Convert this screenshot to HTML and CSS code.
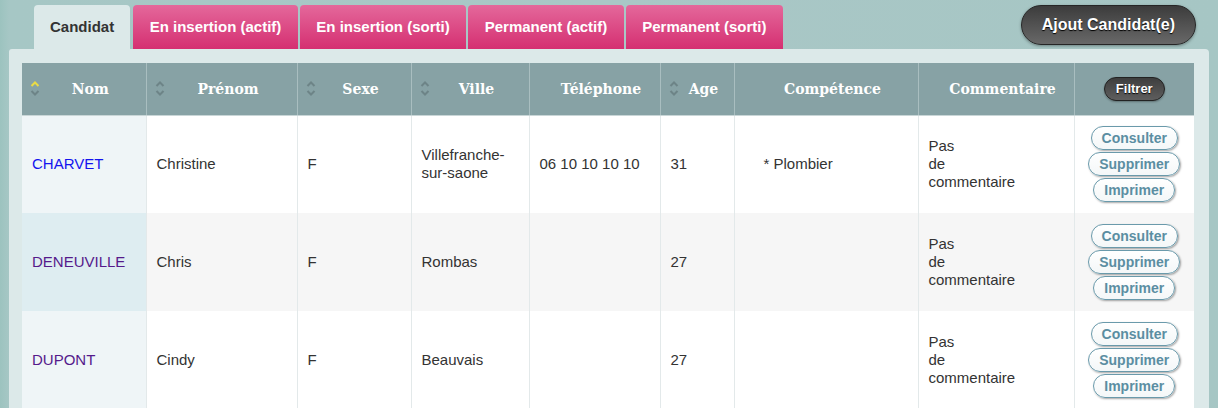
FILE: index.html
```html
<!DOCTYPE html>
<html lang="fr">
<head>
  <meta charset="UTF-8" />
  <title>Candidats</title>
  <link rel="stylesheet" href="styles.css">
</head>
<body>

<div class="page">
  <div class="topbar">
    <div class="tabs">
      <a class="tab current">Candidat</a>
      <a class="tab">En insertion (actif)</a>
      <a class="tab">En insertion (sorti)</a>
      <a class="tab">Permanent (actif)</a>
      <a class="tab">Permanent (sorti)</a>
    </div>
    <button class="add-btn">Ajout Candidat(e)</button>
  </div>

  <div class="panel">
    <table class="list">
      <colgroup>
        <col style="width:124px"><col style="width:151px"><col style="width:114px">
        <col style="width:118px"><col style="width:131px"><col style="width:74px">
        <col style="width:184px"><col style="width:156px"><col style="width:120px">
      </colgroup>
      <thead>
        <tr>
          <th><svg class="sort" width="10" height="17" viewBox="0 0 10 17"><path class="up on" d="M1.5 6 L5 2.5 L8.5 6"/><path class="down" d="M1.5 11 L5 14.5 L8.5 11"/></svg>Nom</th>
          <th><svg class="sort" width="10" height="17" viewBox="0 0 10 17"><path class="up" d="M1.5 6 L5 2.5 L8.5 6"/><path class="down" d="M1.5 11 L5 14.5 L8.5 11"/></svg>Prénom</th>
          <th><svg class="sort" width="10" height="17" viewBox="0 0 10 17"><path class="up" d="M1.5 6 L5 2.5 L8.5 6"/><path class="down" d="M1.5 11 L5 14.5 L8.5 11"/></svg>Sexe</th>
          <th><svg class="sort" width="10" height="17" viewBox="0 0 10 17"><path class="up" d="M1.5 6 L5 2.5 L8.5 6"/><path class="down" d="M1.5 11 L5 14.5 L8.5 11"/></svg>Ville</th>
          <th>Téléphone</th>
          <th><svg class="sort" width="10" height="17" viewBox="0 0 10 17"><path class="up" d="M1.5 6 L5 2.5 L8.5 6"/><path class="down" d="M1.5 11 L5 14.5 L8.5 11"/></svg>Age</th>
          <th>Compétence</th>
          <th>Commentaire</th>
          <th><button class="filter-btn">Filtrer</button></th>
        </tr>
      </thead>
      <tbody>
        <tr>
          <td class="name"><a class="new">CHARVET</a></td>
          <td>Christine</td>
          <td>F</td>
          <td>Villefranche-sur-saone</td>
          <td>06 10 10 10 10</td>
          <td>31</td>
          <td class="skills">* Plombier</td>
          <td>Pas<br>de<br>commentaire</td>
          <td class="actions">
            <button class="act">Consulter</button>
            <button class="act">Supprimer</button>
            <button class="act">Imprimer</button>
          </td>
        </tr>
        <tr class="odd">
          <td class="name"><a>DENEUVILLE</a></td>
          <td>Chris</td>
          <td>F</td>
          <td>Rombas</td>
          <td></td>
          <td>27</td>
          <td class="skills"></td>
          <td>Pas<br>de<br>commentaire</td>
          <td class="actions">
            <button class="act">Consulter</button>
            <button class="act">Supprimer</button>
            <button class="act">Imprimer</button>
          </td>
        </tr>
        <tr>
          <td class="name"><a>DUPONT</a></td>
          <td>Cindy</td>
          <td>F</td>
          <td>Beauvais</td>
          <td></td>
          <td>27</td>
          <td class="skills"></td>
          <td>Pas<br>de<br>commentaire</td>
          <td class="actions">
            <button class="act">Consulter</button>
            <button class="act">Supprimer</button>
            <button class="act">Imprimer</button>
          </td>
        </tr>
      </tbody>
    </table>
  </div>
</div>

</body>
</html>
```

FILE: styles.css
```css
* {
  box-sizing: border-box;
}
html, body {
  margin: 0;
  padding: 0;
  height: 100%;
  overflow: hidden;
  font-family: 'Liberation Sans', Arial, sans-serif;
}

body {
  background: linear-gradient(90deg, #9cc3bf 0px, #a6c7c5 9px, #a9c7c6 50%, #a6c6c4 100%);
}

.page {
  padding: 5px 9px 0;
}

.topbar {
  display: flex;
  align-items: flex-start;
  padding: 0 13px 0 25px;
}

.tabs {
  display: flex;
  gap: 2px;
}

.tab {
  display: block;
  height: 44px;
  line-height: 44px;
  padding: 0 16.5px;
  font-size: 15px;
  font-weight: bold;
  color: #fff;
  border-radius: 4px 4px 0 0;
  background: linear-gradient(#e4689b, #d52f71);
  cursor: pointer;
}

.tab.current {
  background: #dce9e9;
  color: #333;
  padding: 0 16px;
  margin-right: 1px;
}

.add-btn {
  margin-left: auto;
  height: 40px;
  padding: 0 20px;
  font-family: inherit;
  font-size: 16px;
  font-weight: bold;
  color: #fff;
  text-shadow: 0 1px 1px #000;
  background: linear-gradient(#3c3c3c, #686868);
  border: 1px solid #262626;
  border-radius: 20px;
  box-shadow: 0 1px 3px rgba(0,0,0,0.35);
  cursor: pointer;
}

.panel {
  background: #dce9e9;
  border-radius: 3px 4px 0 0;
  padding: 14px 15px 0 13px;
}

.list {
  width: 100%;
  table-layout: fixed;
  border-collapse: collapse;
}

.list th {
  position: relative;
  height: 52px;
  padding: 0 6px 0 19px;
  background: #87a2a5;
  color: #fff;
  font-family: 'DejaVu Serif', serif;
  font-size: 14px;
  font-weight: bold;
  text-align: center;
  border-right: 1px solid #a9bec0;
  border-bottom: 1px solid #c9d6d7;
}

.list th:last-child {
  border-right: none;
  padding: 0;
}

.sort {
  position: absolute;
  left: 8px;
  top: 17px;
}

.sort path {
  fill: none;
  stroke: #6d8487;
  stroke-width: 2;
}

.sort path.on {
  stroke: #eadb45;
}

.filter-btn {
  height: 24px;
  padding: 0 11px;
  font-family: 'Liberation Sans', Arial, sans-serif;
  font-size: 13px;
  font-weight: bold;
  color: #fff;
  text-shadow: 0 1px 1px #000;
  background: linear-gradient(#3e3e3e, #5e5e5e);
  border: 1px solid #222;
  border-radius: 12px;
  box-shadow: 0 1px 2px rgba(0,0,0,0.3);
  cursor: pointer;
}

.list td {
  height: 98px;
  padding: 0 10px;
  font-size: 15px;
  line-height: 18px;
  color: #333;
  background: #fff;
  vertical-align: middle;
  border-right: 1px solid #e3e9ea;
}

.list td:last-child {
  border-right: none;
}

.list tr.odd td {
  background: #f6f6f6;
}

.list td.name {
  background: #eff5f7;
}

.list tr.odd td.name {
  background: #deedf1;
}

.name a {
  color: #551a8b;
  text-decoration: none;
  cursor: pointer;
}

.name a.new {
  color: #1414ee;
}

.list td.skills {
  padding-left: 29px;
}

.list td.actions {
  padding: 0;
  text-align: center;
}

.act {
  display: block;
  margin: 2px auto;
  height: 24px;
  padding: 0 10px;
  font-family: 'Liberation Sans', Arial, sans-serif;
  font-size: 14px;
  font-weight: bold;
  color: #5b8ea2;
  background: linear-gradient(#fff, #f4f7f8);
  border: 1px solid #6a9aab;
  border-radius: 12px;
  box-shadow: 1px 1px 2px rgba(0,0,0,0.35);
  cursor: pointer;
}
```
